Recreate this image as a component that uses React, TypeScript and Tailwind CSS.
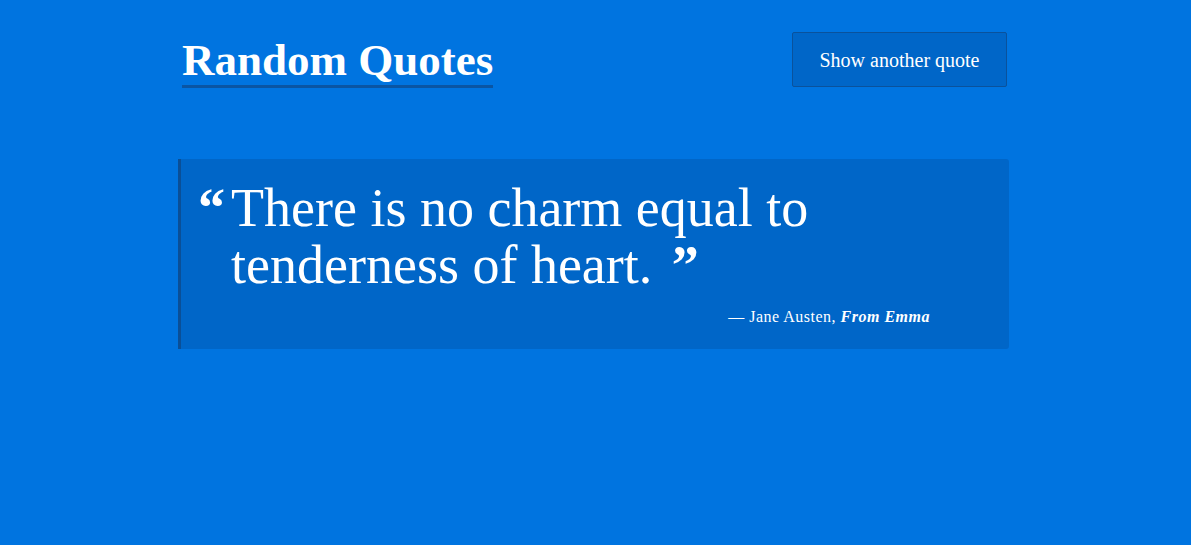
import React from "react";

export default function App() {
  return (
    <div
      className="min-h-[545px] w-full bg-[#0074e0] text-white"
      style={{ fontFamily: '"Liberation Serif", "DejaVu Serif", serif' }}
    >
      <div className="mx-auto w-[835px] pt-[32px]">
        <header className="flex items-start justify-between pl-[4px] pr-[6px]">
          <h1 className="mt-[5px] border-b-[3px] border-[#0a55a3] pb-[2px] text-[45px] font-bold leading-[46px]">
            Random Quotes
          </h1>
          <button className="h-[55px] w-[215px] rounded-[2px] border border-[#0a529c] bg-[#0066c8] pt-[1px] text-[20px] text-white">
            Show another quote
          </button>
        </header>
        <div className="mt-[71px] h-[190px] w-[831px] rounded-r-[3px] border-l-[3px] border-[#0a4f97] bg-[#0066c8] pl-[17px] pr-[79px] pt-[21px]">
          <blockquote className="flex text-[54px] leading-[57px]">
            <span className="w-[33px] shrink-0 font-bold">“</span>
            <p>
              There is no charm equal to
              <br />
              tenderness of heart. <span className="ml-[6px] font-bold">”</span>
            </p>
          </blockquote>
          <p className="mt-[11px] text-right text-[16px] tracking-[0.5px]">
            — Jane Austen, <i className="font-bold">From Emma</i>
          </p>
        </div>
      </div>
    </div>
  );
}
